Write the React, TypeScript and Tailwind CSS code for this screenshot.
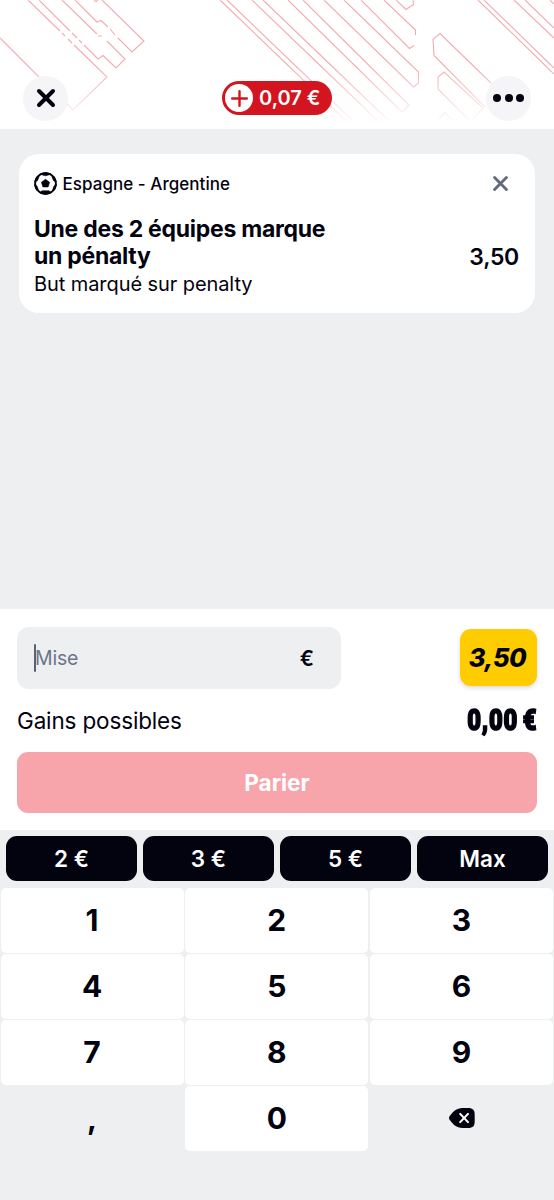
import { useState } from 'react'

const PRESETS = ['2 €', '3 €', '5 €', 'Max']
const KEYS = ['1', '2', '3', '4', '5', '6', '7', '8', '9', ',', '0', 'delete']

function HeaderPattern() {
  return (
    <svg
      className="absolute inset-0 h-full w-full"
      viewBox="0 0 554 129"
      fill="none"
      stroke="#f2abb0"
      strokeWidth="1.1"
      aria-hidden="true"
    >
      <defs>
        <linearGradient id="fade" x1="0" y1="0" x2="0" y2="129" gradientUnits="userSpaceOnUse">
          <stop offset="0.5" stopColor="#fff" />
          <stop offset="0.95" stopColor="#fff" stopOpacity="0.05" />
        </linearGradient>
        <mask id="fadeMask" maskUnits="userSpaceOnUse" x="0" y="0" width="554" height="129">
          <rect width="554" height="129" fill="url(#fade)" />
        </mask>
      </defs>
      <g mask="url(#fadeMask)">
        {/* left block */}
        <path d="M0 38L39 77M28 0L60 31M62 33L65 36M68 39L72 43M74 45L107 77L73 110L67 104" />
        <path d="M39 0L70 31M72 33L77 38M79 40L82 43M84 45L98 59L103 55.5L116 68L125 59L107 41M62 0L97 34M98 36L102 36" />
        <path d="M75 0L97 22L101 20.5L108 27M110 29L115 35M118 38L132 52L144 41L102 0M94 0L96 1.5L98 0" />

        {/* middle block */}
        <path d="M220 0L345 120M227 0L352 120M252 0L377 120M263 0L388 120" />
        <path d="M288 0L402 112L409 105L303 0" />
        <path d="M324 0L413.5 87L418.5 83V72L344 0" />
        <path d="M361 0L409.5 48.5L414 45.5M384 0L415.5 30V35" />
        <path d="M396 0L406 9.5L413.5 4.5L413 0" />

        {/* right block */}
        <path d="M491 83L440 33.5L433 39.5L434 55.5L485 107" />
        <path d="M468 119L438 89V77L444 72L483 108L472 120M440 121V117L445 113L452 120" />
        <path d="M478 0L554 74M484 0L554 68M514 0L554 38M525 0L554 28M550 0L554 4" />
      </g>
    </svg>
  )
}

function CrossIcon({ size, color, width }: { size: number; color: string; width: number }) {
  return (
    <svg width={size} height={size} viewBox="0 0 20 20" fill="none" stroke={color} strokeWidth={width} strokeLinecap="round">
      <path d="M3 3L17 17M17 3L3 17" />
    </svg>
  )
}

function BallIcon() {
  return (
    <svg width="23" height="23" viewBox="0 0 24 24">
      <defs>
        <clipPath id="ball">
          <circle cx="12" cy="12" r="11.8" />
        </clipPath>
      </defs>
      <circle cx="12" cy="12" r="10.8" fill="#fff" stroke="#03020f" strokeWidth="1.9" />
      <g fill="#03020f" stroke="#03020f" strokeWidth="0.6" strokeLinejoin="round" clipPath="url(#ball)">
        <path d="M12 7.6L16.3 10.7L14.7 15.6H9.3L7.7 10.7Z" />
        <path d="M6 1.6L8.6 3L12 4L15.4 3L18 1.6L12 0Z" />
        <path d="M0 10.5L3.6 9L5.4 4.6L2.4 4.8Z" />
        <path d="M24 10.5L20.4 9L18.6 4.6L21.6 4.8Z" />
        <path d="M0 12.5L3.4 15L4.6 19.4L1.6 19Z" />
        <path d="M24 12.5L20.6 15L19.4 19.4L22.4 19Z" />
        <path d="M6 22L8.2 19.6H15.8L18 22L12 24Z" />
      </g>
    </svg>
  )
}

function DeleteIcon() {
  return (
    <svg className="ml-px" width="26" height="20" viewBox="0 0 26 20">
      <path
        d="M0.6 8.3C3.5 4 7.5 0 13.5 0H19C24 0 25.7 2 25.7 7V13C25.7 18 24 20 19 20H13.5C7.5 20 3.5 16 0.6 11.7C-0.2 10.5 -0.2 9.5 0.6 8.3Z"
        fill="#03020f"
      />
      <path d="M11.2 5.9L19 14.1M19 5.9L11.2 14.1" stroke="#fff" strokeWidth="2.1" strokeLinecap="round" />
    </svg>
  )
}

export default function App() {
  const [stake, setStake] = useState('')

  function press(key: string) {
    setStake((s) => (key === 'delete' ? s.slice(0, -1) : s + key))
  }

  return (
    <div className="flex h-[1200px] w-[554px] flex-col overflow-hidden bg-[#edeff1] font-['Inter',sans-serif] text-[#03020f]">
      <header className="relative h-[129px] shrink-0 bg-white">
        <HeaderPattern />
        <div className="relative flex items-center justify-between px-[23px] pt-[75.5px]">
          <button aria-label="Fermer" className="flex size-[45px] items-center justify-center rounded-full bg-[#f5f4f6]">
            <CrossIcon size={20} color="#03020f" width={4} />
          </button>
          <div className="flex h-[34px] w-[110px] items-center rounded-full bg-[#d3151f] pl-[3px]">
            <span className="flex size-7 items-center justify-center rounded-full bg-white">
              <svg width="17" height="17" viewBox="0 0 17 17" stroke="#d3151f" strokeWidth="2.4" strokeLinecap="round">
                <path d="M8.5 1.2V15.8M1.2 8.5H15.8" />
              </svg>
            </span>
            <span className="ml-[6px] whitespace-nowrap text-[20px] font-semibold text-white">0,07 €</span>
          </div>
          <button aria-label="Options" className="flex size-[45px] items-center justify-center gap-[3.5px] rounded-full bg-[#f5f4f6]">
            <span className="size-2 rounded-full bg-[#03020f]" />
            <span className="size-2 rounded-full bg-[#03020f]" />
            <span className="size-2 rounded-full bg-[#03020f]" />
          </button>
        </div>
      </header>

      <main className="flex-1 px-[19px] pt-[25px]">
        <section className="h-[159px] rounded-[20px] bg-white pr-4 pl-[15px] pt-[17px]">
          <div className="flex h-6 items-center">
            <BallIcon />
            <span className="mt-[3px] ml-[5.5px] text-[17px] font-medium tracking-[0.04px]">Espagne - Argentine</span>
            <button aria-label="Supprimer" className="mr-[10.5px] ml-auto">
              <CrossIcon size={17} color="#616b7d" width={3.4} />
            </button>
          </div>
          <div className="mt-[21px] flex items-center justify-between">
            <div>
              <h2 className="text-[23px] leading-[27px] font-bold tracking-[-0.27px]">
                Une des 2 équipes marque
                <br />
                un pénalty
              </h2>
              <p className="text-[20px] leading-7 tracking-[-0.08px]">But marqué sur penalty</p>
            </div>
            <span className="mt-px text-[23px] font-semibold tracking-[-0.3px]">3,50</span>
          </div>
        </section>
      </main>

      <section className="h-[221px] shrink-0 bg-white px-[17px] pt-[18px]">
        <div className="flex items-center justify-between">
          <div className="flex h-[62px] w-[324px] items-center rounded-[12px] bg-[#edeff1] pr-[27px] pl-[17px]">
            <span className="h-7 w-[2px] rounded-full bg-[#5a6172]" />
            <span className="mt-px -ml-px text-[19.5px] tracking-[-0.2px] text-[#6d7488]">{stake || 'Mise'}</span>
            <span className="mt-px ml-auto text-[21px] font-semibold">€</span>
          </div>
          <div className="mb-px flex h-[57px] w-[77px] items-center justify-center rounded-[11px] bg-[#ffcc00] pt-[2px] pr-[2px] text-[25.5px] font-extrabold tracking-[-0.5px] italic shadow-[0_2px_4px_rgba(0,0,0,0.14)]">
            3,50
          </div>
        </div>
        <div className="flex h-[63px] items-center justify-between">
          <span className="text-[22.5px] tracking-[-0.15px]">Gains possibles</span>
          <span className="origin-right scale-x-[0.82] font-['Roboto',sans-serif] text-[29px] font-black tracking-[0.9px] whitespace-nowrap [word-spacing:-2.5px] [-webkit-text-stroke:1.6px_#03020f]">
            0,00 €
          </span>
        </div>
        <button className="h-[61px] w-full rounded-[11px] bg-[#f7a5ab] text-[22.5px] font-bold text-white">
          Parier
        </button>
      </section>

      <section className="h-[370px] shrink-0 pt-[6px]">
        <div className="grid grid-cols-4 gap-[6px] px-[6px]">
          {PRESETS.map((label) => (
            <button key={label} className="h-[45px] rounded-[11px] bg-[#03020f] text-[22.5px] font-semibold text-white">
              {label}
            </button>
          ))}
        </div>
        <div className="mt-[7px] grid grid-cols-3 gap-[1.5px] pr-px pl-[0.5px]">
          {KEYS.map((key) => (
            <button
              key={key}
              onClick={() => press(key)}
              aria-label={key}
              className={`flex h-[64.5px] items-center justify-center rounded-[5px] text-[30px] font-bold ${
                key === ',' || key === 'delete' ? '' : 'bg-white'
              }`}
            >
              {key === 'delete' ? <DeleteIcon /> : key}
            </button>
          ))}
        </div>
      </section>
    </div>
  )
}
